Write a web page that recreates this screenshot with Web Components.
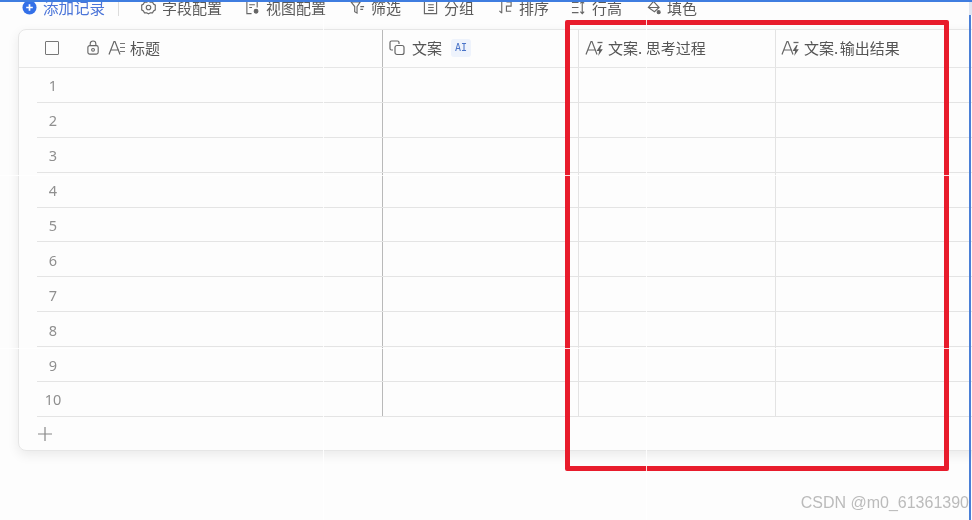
<!DOCTYPE html>
<html lang="zh">
<head>
<meta charset="utf-8">
<title>表格</title>
<style>
  html, body { margin: 0; height: 100%; overflow: hidden; background: #fdfdfd; }
  body { font-family: "Noto Sans CJK SC", "Liberation Sans", sans-serif; color: #555; }
  sheet-app { filter: blur(0.35px); }
</style>
</head>
<body>
<sheet-app>
  <tool-bar slot="toolbar">
    <tool-item icon="add" primary>添加记录</tool-item>
    <tool-item icon="gear" gap="20" divider>字段配置</tool-item>
    <tool-item icon="view" gap="23">视图配置</tool-item>
    <tool-item icon="filter" gap="24">筛选</tool-item>
    <tool-item icon="group" gap="22">分组</tool-item>
    <tool-item icon="sort" gap="24">排序</tool-item>
    <tool-item icon="height" gap="22">行高</tool-item>
    <tool-item icon="fill" gap="24">填色</tool-item>
  </tool-bar>
  <data-sheet slot="sheet" rows="10"></data-sheet>
</sheet-app>
<red-box></red-box>
<shot-frame></shot-frame>

<script>
const ICONS = {
  add: '<circle cx="8" cy="8" r="7.5" fill="#3370e8" stroke="none"/><path d="M8 4.5v7M4.5 8h7" stroke="#fff" stroke-width="1.8"/>',
  gear: '<path d="M8 1.3l2 1.1 2.3-.1 1.1 2 1.9 1.2-.1 2.5.1 2.5-1.9 1.2-1.1 2-2.3-.1-2 1.1-2-1.1-2.3.1-1.1-2L.7 10.5l.1-2.5-.1-2.5 1.9-1.2 1.1-2 2.3.1z"/><circle cx="8" cy="8" r="2.4"/>',
  view: '<path d="M7 14.5H2V1.5h11v6.5M4.5 5h6M4.5 8h3"/><circle cx="11.8" cy="12" r="2" fill="#666"/>',
  filter: '<path d="M1 2h10L7.5 7v7L5 12.5V7zM11 7h4M11 10h3"/>',
  group: '<path d="M1.500 1.500h13v13h-13zM5.500 5h6M5.500 8h6M5.500 11h6"/>',
  sort: '<path d="M4 1v13M1.500 11.500L4 14M9 2h5v4.500H9M14 6.500H9V12h5"/>',
  height: '<path d="M1 2.500h7M1 8h7M1 13.500h7M12 1.500v13M10 12.500l2 2 2-2M10 3.500l2-2 2 2"/>',
  fill: '<path d="M8 1.500L14 8l-5 4.500L2.500 8zM2.500 8h11"/><circle cx="13.500" cy="13" r="1.600" fill="#666"/>',
  lock: '<rect x="2" y="6" width="11" height="9" rx="2"/><path d="M4.500 6V4a3 3 0 0 1 6 0v2"/><circle cx="7.500" cy="10.500" r="1.500"/>',
  link: '<path d="M10 4V2.500A1.500 1.500 0 0 0 8.500 1h-6A1.500 1.500 0 0 0 1 2.500v6A1.500 1.500 0 0 0 2.500 10H4"/><rect x="6" y="5.500" width="9" height="9" rx="2"/>'
};

function svg(name, size) {
  return `<svg viewBox="0 0 16 16" width="${size}" height="${size}" fill="none" stroke="#666" stroke-width="1.200">${ICONS[name]}</svg>`;
}

// the "A" field type glyph: letter plus a small mark on its right
function fieldGlyph(kind) {
  const mark = kind === "text"
    ? '<path d="M12 4.500h5M12 8.500h5M12 12.500h5" stroke="#777" stroke-width="1.200" fill="none"/>'
    : '<path d="M12.500 3.500h5" stroke="#666" stroke-width="1.300"/><path d="M15.500 6l-4 6h2.700l-1 5 4.600-6.800h-2.700l1.600-4.200z" fill="#5f5f5f"/>';
  return `<svg viewBox="0 0 18 18" width="18" height="18" fill="none">
    <path d="M1 15.500L6 2.500h1l5 13M3 11h8" stroke="#666" stroke-width="1.200"/>${mark}</svg>`;
}

class SheetApp extends HTMLElement {
  constructor() {
    super();
    this.attachShadow({ mode: "open" }).innerHTML = `
      <style>
        :host { display: flex; flex-direction: column; height: 520px; overflow: hidden; }
      </style>
      <slot name="toolbar"></slot>
      <slot name="sheet"></slot>`;
  }
}

class ToolBar extends HTMLElement {
  constructor() {
    super();
    this.attachShadow({ mode: "open" }).innerHTML = `
      <style>
        :host { display: flex; height: 29px; padding-left: 22px; box-sizing: border-box; align-items: flex-start; flex: none; }
      </style>
      <slot></slot>`;
  }
}

class ToolItem extends HTMLElement {
  connectedCallback() {
    const gap = this.getAttribute("gap") || 0;
    const primary = this.hasAttribute("primary");
    const divider = this.hasAttribute("divider");
    const root = this.shadowRoot || this.attachShadow({ mode: "open" });
    root.innerHTML = `
      <style>
        :host { display: flex; align-items: center; gap: 6px; height: 15px; font-size: ${primary ? 15.5 : 15}px; line-height: 15px; white-space: nowrap; margin-left: ${gap}px; color: ${primary ? "#4a74d8" : "#5a5a5a"}; }
        .rule { width: 1px; height: 16px; background: #dcdcdc; margin-right: 16px; margin-left: -7px; }
        svg { flex: none; }
      </style>
      ${divider ? '<span class="rule"></span>' : ""}
      ${svg(this.getAttribute("icon"), 15)}
      <slot></slot>`;
  }
}

class HeadCell extends HTMLElement {
  constructor() {
    super();
    this.attachShadow({ mode: "open" }).innerHTML = `
      <style>
        :host { display: flex; align-items: center; gap: 5px; padding: 0 0 2px 6px; font-size: 15px; color: #555; box-sizing: border-box; border-right: 1px solid var(--rule, #e3e3e3); white-space: nowrap; min-width: 0; }
        :host([last]) { border-right: 0; padding-left: 5px; }
      </style>
      <slot></slot>`;
  }
}

class SheetRow extends HTMLElement {
  constructor() {
    super();
    this.attachShadow({ mode: "open" }).innerHTML = `
      <style>
        :host { display: grid; grid-template-columns: 346px 196px 197px 1fr; height: 34.9px; box-sizing: border-box; margin-left: 18px; border-bottom: 1px solid #e4e4e4; }
        div { border-right: 1px solid #e3e3e3; }
        .first { border-right-color: #b9b9b9; display: flex; align-items: center; }
        .num { width: 32px; padding-top: 1px; text-align: center; font-size: 14.5px; color: #8f8f8f; font-family: "Noto Sans", "Liberation Sans", sans-serif; }
        .last { border-right: 0; }
      </style>
      <div class="first"><span class="num"><slot></slot></span></div>
      <div></div><div></div><div class="last"></div>`;
  }
}

class DataSheet extends HTMLElement {
  constructor() {
    super();
    const count = Number(this.getAttribute("rows")) || 10;
    let rows = "";
    for (let i = 1; i <= count; i++) rows += `<sheet-row>${i}</sheet-row>`;
    this.attachShadow({ mode: "open" }).innerHTML = `
      <style>
        :host { display: block; width: 1000px; margin-left: 18px; height: 422px; flex: none; box-sizing: border-box; border: 1px solid #e6e6e6; border-radius: 8px; box-shadow: 0 4px 12px rgba(0,0,0,.08); background: #fdfdfd; }
        .head { display: grid; grid-template-columns: 364px 196px 197px 1fr; height: 38px; box-sizing: border-box; border-bottom: 1px solid #e6e6e6; }
        .head head-cell:first-child { --rule: #b9b9b9; padding-left: 26px; gap: 0; }
        .check { width: 12px; height: 12px; border: 1.5px solid #777; border-radius: 1px; margin-right: 27px; flex: none; }
        .tag { font: 10px "DejaVu Sans Mono", monospace; color: #4a74c8; background: #eef3fc; border-radius: 3px; padding: 0 4px; height: 18px; line-height: 18px; margin-left: 4px; }
        .add { height: 34px; display: flex; align-items: center; padding-left: 18px; }
        .gap { margin-right: 7px; display: flex; }
        .dot3 .d { letter-spacing: 3.5px; }
        .dot1 .d { letter-spacing: 1.5px; }
      </style>
      <div class="head">
        <head-cell>
          <span class="check"></span>
          <span class="gap">${svg("lock", 15)}</span>
          <span class="gap" style="margin-right:4px">${fieldGlyph("text")}</span>
          <span>标题</span>
        </head-cell>
        <head-cell>
          <span class="gap" style="margin-right:2px">${svg("link", 16)}</span><span>文案</span><span class="tag">AI</span>
        </head-cell>
        <head-cell>${fieldGlyph("ai")}<span class="dot3">文案<span class="d">.</span>思考过程</span></head-cell>
        <head-cell last>${fieldGlyph("ai")}<span class="dot1">文案<span class="d">.</span>输出结果</span></head-cell>
      </div>
      ${rows}
      <div class="add"><svg viewBox="0 0 16 16" width="16" height="16" fill="none" stroke="#888" stroke-width="1.200"><path d="M8 1v14M1 8h14"/></svg></div>`;
  }
}

// the hand-drawn red marker around the two derived columns
class RedBox extends HTMLElement {
  constructor() {
    super();
    this.attachShadow({ mode: "open" }).innerHTML = `
      <style>
        :host { display: block; position: absolute; left: 565px; top: 20px; width: 384px; height: 451px; box-sizing: border-box; border: 5px solid #e81c2c; border-radius: 2px; filter: blur(0.3px); }
      </style>`;
  }
}

// screenshot leftovers: blue window edge, image seams, CSDN watermark
class ShotFrame extends HTMLElement {
  constructor() {
    super();
    this.attachShadow({ mode: "open" }).innerHTML = `
      <style>
        :host { position: absolute; left: 0; top: 0; width: 972px; height: 520px; display: block; pointer-events: none; }
        .top { position: absolute; left: 0; width: 972px; top: 0; height: 2px; background: #3f7de0; }
        .corner { position: absolute; left: 969px; width: 3px; top: 2px; height: 13px; background: #dfe6f2; }
        .right { position: absolute; left: 969px; top: 15px; height: 505px; width: 2px; background: #4a7fd6; }
        .v, .h { position: absolute; background: #fff; opacity: .85; }
        .v { top: 15px; bottom: 0; width: 1px; }
        .h { left: 0; right: 3px; height: 1px; }
        .mark { position: absolute; right: 3px; top: 493px; font: 16px "Liberation Sans", sans-serif; color: #bbb; white-space: nowrap; line-height: 20px; filter: blur(0.4px); }
      </style>
      <div class="v" style="left:323px"></div>
      <div class="v" style="left:646px"></div>
      <div class="h" style="top:175px"></div>
      <div class="h" style="top:348px"></div>
      <div class="top"></div>
      <div class="corner"></div>
      <div class="right"></div>
      <span class="mark">CSDN @m0_61361390</span>`;
  }
}

customElements.define("sheet-app", SheetApp);
customElements.define("tool-bar", ToolBar);
customElements.define("tool-item", ToolItem);
customElements.define("head-cell", HeadCell);
customElements.define("sheet-row", SheetRow);
customElements.define("data-sheet", DataSheet);
customElements.define("red-box", RedBox);
customElements.define("shot-frame", ShotFrame);
</script>
</body>
</html>
